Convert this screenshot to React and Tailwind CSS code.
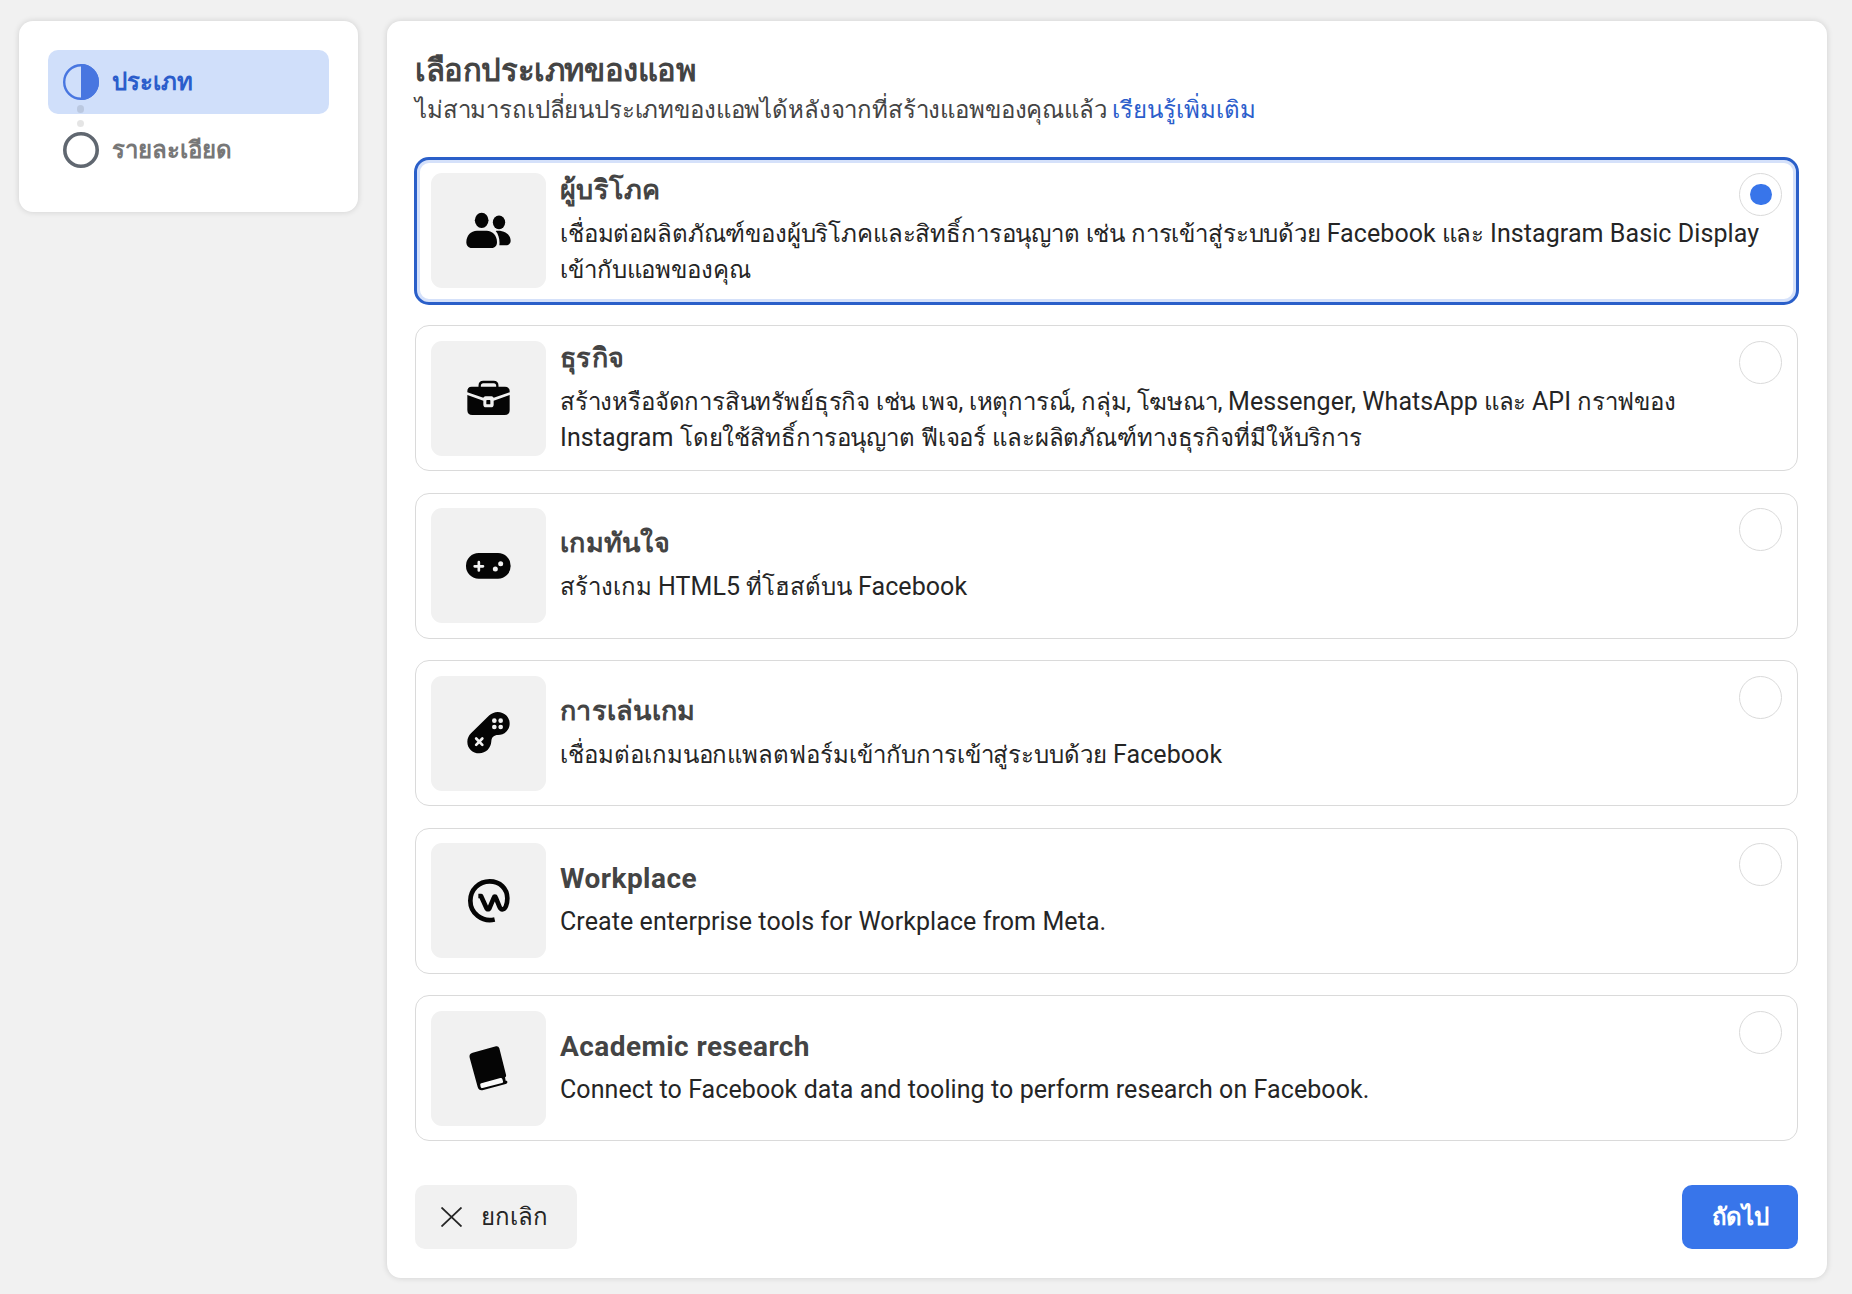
import React from "react";

const K = "#050505";
const G = "#f1f1f1";

const ConsumerIcon = () => (
  <svg viewBox="33 24 345 345" className="size-full" fill={K}>
    <ellipse cx="185" cy="166" rx="20.5" ry="23" />
    <ellipse cx="237" cy="172" rx="18.5" ry="20.5" />
    <path d="M171 197h29c18 0 31 15 31 34 0 11-6 18-16 18h-60c-10 0-16-7-16-18 0-19 13-34 32-34z" />
    <path d="M227 198c24-3 45 10 45 29 0 8-6 14-14 14h-20c2-16-2-33-11-43z" />
  </svg>
);

const BriefcaseIcon = () => (
  <svg viewBox="33 18 345 345" className="size-full" fill={K}>
    <path d="M179 157v-5c0-7 4-11 11-11h31c7 0 11 4 11 11v5" fill="none" stroke={K} strokeWidth="7" />
    <path d="M155 155h100c9 0 14 5 14 14v3l-48 16c-2-3-5-4-9-4h-13c-4 0-7 1-9 4l-48-16v-3c0-9 4-14 13-14z" />
    <path d="M142 180l48 17v12c0 5 3 8 8 8h15c5 0 8-3 8-8v-12l48-17v45c0 10-5 15-15 15h-97c-10 0-15-5-15-15z" />
    <rect x="199" y="195" width="12" height="13" rx="2" />
  </svg>
);

const InstantGameIcon = () => (
  <svg viewBox="33 24 345 345" className="size-full" fill={K}>
    <rect x="138" y="159" width="134" height="77" rx="38" />
    <path d="M164 199h25M176.500 186.500v25" stroke={G} strokeWidth="8" strokeLinecap="round" />
    <circle cx="242" cy="191" r="7.500" fill={G} />
    <circle cx="226" cy="207" r="7.500" fill={G} />
  </svg>
);

const GamepadIcon = () => (
  <svg viewBox="33 18 345 345" className="size-full" fill={K}>
    <path d="M208 136c7-6 16-10 25-10 20 0 36 15 36 35 0 19-16 34-35 34-12 0-20 7-20 19-1 21-17 36-36 36-21 0-36-15-36-35 0-9 4-18 11-25z" />
    <path d="M168.500 205.500l18.500 19M187 205.500l-18.500 19" stroke={G} strokeWidth="8" strokeLinecap="round" />
    <g fill={G}>
      <circle cx="223" cy="152" r="7" />
      <circle cx="242" cy="152" r="7" />
      <circle cx="223" cy="171" r="7" />
      <circle cx="242" cy="171" r="7" />
    </g>
  </svg>
);

const WorkplaceIcon = () => (
  <svg viewBox="33 24 345 345" className="size-full" fill="none" stroke={K}>
    <path
      d="M224 253.500C186 262 151 235 151 197c0-33 26-58 58-58 31 0 53 22 53 51 0 18-6 33-15 33-5 0-7-4-9-9l-11-27c-1-3-4-3-5 0l-13 31c-2 6-8 6-10 0l-16-35h-8"
      strokeWidth="14"
      strokeLinejoin="round"
    />
  </svg>
);

const BookIcon = () => (
  <svg viewBox="33 18 345 345" className="size-full" fill={K}>
    <path d="M158 143l70-19c5-1 8 1 10 6l20 79c1 4 0 6-3 8l2 10c4 0 6 2 5 5 0 3-2 4-5 5l-67 18c-9 3-14-1-17-9l-24-88c-2-8 1-13 9-15z" />
    <path d="M184 235l57-16c3-1 5 0 6 3l2 7c1 3 0 4-3 5l-58 15c-3 1-5 0-6-3l-1-5c-1-3 0-5 3-6z" fill="#fafafa" />
  </svg>
);

const E = ({ children }) => <span className="text-[25px] tracking-[0.08px]">{children}</span>;

const TYPES = [
  {
    title: "ผู้บริโภค",
    icon: <ConsumerIcon />,
    lines: [
      <span className="tracking-[-0.15px]">
        เชื่อมต่อผลิตภัณฑ์ของผู้บริโภคและสิทธิ์การอนุญาต เช่น การเข้าสู่ระบบด้วย <E>Facebook</E> และ <E>Instagram Basic Display</E>
      </span>,
      <span className="tracking-[-0.1px]">เข้ากับแอพของคุณ</span>,
    ],
  },
  {
    title: "ธุรกิจ",
    icon: <BriefcaseIcon />,
    lines: [
      <span className="tracking-[-0.18px]">
        สร้างหรือจัดการสินทรัพย์ธุรกิจ เช่น เพจ, เหตุการณ์, กลุ่ม, โฆษณา, <E>Messenger, WhatsApp</E> และ <E>API</E> กราฟของ
      </span>,
      <span className="tracking-[-0.12px]">
        <E>Instagram </E>โดยใช้สิทธิ์การอนุญาต ฟีเจอร์ และผลิตภัณฑ์ทางธุรกิจที่มีให้บริการ
      </span>,
    ],
  },
  {
    title: "เกมทันใจ",
    icon: <InstantGameIcon />,
    lines: [
      <>
        สร้างเกม <E>HTML5</E> ที่โฮสต์บน <E>Facebook</E>
      </>,
    ],
  },
  {
    title: "การเล่นเกม",
    icon: <GamepadIcon />,
    lines: [
      <span className="tracking-[-0.05px]">
        เชื่อมต่อเกมนอกแพลตฟอร์มเข้ากับการเข้าสู่ระบบด้วย <E>Facebook</E>
      </span>,
    ],
  },
  {
    title: <span className="block text-[28px] leading-9 tracking-[0.45px]">Workplace</span>,
    icon: <WorkplaceIcon />,
    lines: [<E>Create enterprise tools for Workplace from Meta.</E>],
  },
  {
    title: <span className="block text-[28px] leading-9 tracking-[0.45px]">Academic research</span>,
    icon: <BookIcon />,
    lines: [<E>Connect to Facebook data and tooling to perform research on Facebook.</E>],
  },
];

function TypeCard({ type, selected }) {
  const frame = selected
    ? "-m-px h-[148px] rounded-[15px] border-[3px] border-[#2a5fc9] px-[14px] pt-[13.900px] shadow-[inset_0_0_0_3px_#d5e1fa]"
    : "h-[146px] rounded-[14px] border border-[#dadada] px-[15px] pt-[14.900px]";
  return (
    <div className={`flex items-start ${frame}`}>
      <div className="size-[115px] shrink-0 overflow-hidden rounded-[11px] bg-[#f1f1f1]">{type.icon}</div>
      <div className="ml-[14px] flex h-[115px] w-0 grow flex-col justify-center whitespace-nowrap">
        <div className="mb-[3px] h-[40px] text-[27px] leading-[34px] font-bold tracking-[0.25px] text-[#444]">{type.title}</div>
        {type.lines.map((line, i) => (
          <div key={i} className="h-9 text-[24px] leading-9 text-[#252525]">
            {line}
          </div>
        ))}
      </div>
      <div className="flex size-[43px] shrink-0 items-center justify-center rounded-full border border-[#dadada] bg-white">
        {selected && <div className="h-[21px] w-[22px] rounded-full bg-[#3875ea]" />}
      </div>
    </div>
  );
}

export default function App() {
  return (
    <div className="flex h-[1294px] w-[1852px] items-start gap-[29px] overflow-hidden bg-[#f1f1f1] pt-[21px] pl-[19px] font-[Roboto,'Noto_Sans',sans-serif]">
      <nav className="h-[191px] w-[339px] shrink-0 rounded-[14px] bg-white px-[29px] pt-[29px] shadow-[0_0_6px_rgba(0,0,0,0.14)]">
        <div className="flex h-16 items-center rounded-[10px] bg-[#d0dffa] pl-[15px]">
          <svg viewBox="0 0 36 36" className="size-9">
            <circle cx="18" cy="18" r="16.800" fill="none" stroke="#4876e0" strokeWidth="2.400" />
            <path d="M18 0a18 18 0 0 1 0 36z" fill="#4876e0" />
          </svg>
          <span className="ml-[13px] pb-px text-[24px] font-bold text-[#2b5dcb]">ประเภท</span>
        </div>
        <div className="relative z-10 -mt-[9px] ml-[29px] flex w-[7px] flex-col gap-[7px]">
          <span className="h-2 rounded-full bg-black/10" />
          <span className="h-[7px] rounded-full bg-black/10" />
        </div>
        <div className="mt-[5px] flex h-9 items-center pl-[15px]">
          <svg viewBox="0 0 36 36" className="size-9">
            <circle cx="18" cy="18" r="16.200" fill="none" stroke="#606770" strokeWidth="3.600" />
          </svg>
          <span className="ml-[13px] pb-px text-[24px] font-bold text-[#777]">รายละเอียด</span>
        </div>
      </nav>

      <main className="h-[1257px] w-[1440px] shrink-0 rounded-[14px] bg-white px-[28px] pt-[29px] pr-[29px] shadow-[0_0_6px_rgba(0,0,0,0.14)]">
        <h1 className="h-[42px] text-[31px] leading-[42px] font-bold tracking-[-0.4px] text-[#444]">เลือกประเภทของแอพ</h1>
        <p className="h-[36px] text-[24px] leading-[37px] tracking-[-0.15px] whitespace-nowrap text-[#444]">
          ไม่สามารถเปลี่ยนประเภทของแอพได้หลังจากที่สร้างแอพของคุณแล้ว{" "}
          <a className="tracking-normal text-[#2b5dcb]">เรียนรู้เพิ่มเติม</a>
        </p>
        <div className="mt-[29.500px] grid gap-[21.500px]">
          {TYPES.map((type, i) => (
            <TypeCard key={i} type={type} selected={i === 0} />
          ))}
        </div>
        <div className="mt-[44px] flex justify-between">
          <button className="flex h-16 w-[162px] items-center rounded-[10px] bg-[#f1f1f1] pl-[26px] text-[24px] text-[#252525]">
            <svg viewBox="0 0 21 20" className="h-5 w-[21px]" stroke="#252525" strokeWidth="1.800">
              <path d="M.5.5l20 19M20.500.5l-20 19" />
            </svg>
            <span className="ml-[19px]">ยกเลิก</span>
          </button>
          <button className="h-16 w-[116px] rounded-[10px] bg-[#3875ea] text-[24px] font-bold tracking-[-0.3px] text-white">ถัดไป</button>
        </div>
      </main>
    </div>
  );
}
